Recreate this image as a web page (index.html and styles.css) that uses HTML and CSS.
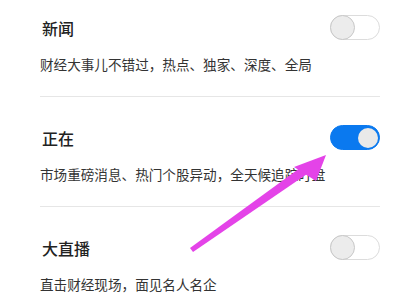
FILE: index.html
```html
<!DOCTYPE html>
<html lang="zh">
<head>
<meta charset="utf-8">
<link rel="stylesheet" href="styles.css">
</head>
<body>
<div class="list">
  <div class="item">
    <div class="row">
      <span class="title">新闻</span>
      <span class="toggle"><span class="knob"></span></span>
    </div>
    <div class="desc">财经大事儿不错过，热点、独家、深度、全局</div>
  </div>
  <div class="item">
    <div class="row">
      <span class="title">正在</span>
      <span class="toggle on"><span class="knob"></span></span>
    </div>
    <div class="desc">市场重磅消息、热门个股异动，全天候追踪盯盘</div>
  </div>
  <div class="item last">
    <div class="row">
      <span class="title">大直播</span>
      <span class="toggle"><span class="knob"></span></span>
    </div>
    <div class="desc">直击财经现场，面见名人名企</div>
  </div>
</div>
<svg class="arrow" width="400" height="305" viewBox="0 0 400 305">
  <polygon points="190,248 193,252 310,172 304,165" fill="#e443e8"/>
  <polygon points="294,167 326,155 316,181" fill="#e443e8"/>
</svg>
</body>
</html>
```
FILE: styles.css
```css
html, body {
  margin: 0;
  padding: 0;
  background: #ffffff;
  width: 400px;
  height: 305px;
  overflow: hidden;
  position: relative;
  font-family: "Noto Sans CJK SC", "Noto Sans", sans-serif;
}
.list {
  padding: 0 20px 0 40px;
}
.item {
  padding: 28px 0 22px 0;
  border-bottom: 1px solid #e6e6e6;
}
.item:first-child {
  padding-top: 15px;
}
.item.last {
  border-bottom: none;
}
.row {
  display: flex;
  align-items: center;
  justify-content: space-between;
  height: 25px;
}
.title {
  font-size: 16px;
  font-weight: 500;
  color: #222;
  padding-left: 2px;
}
.desc {
  margin-top: 14px;
  font-size: 13.6px;
  line-height: 20px;
  color: #333;
  white-space: nowrap;
}
.toggle {
  width: 50px;
  height: 25px;
  box-sizing: border-box;
  border-radius: 13px;
  border: 1.5px solid #dcdcdc;
  background: #fff;
  display: flex;
  align-items: center;
  justify-content: flex-start;
}
.toggle .knob {
  width: 25px;
  height: 25px;
  box-sizing: border-box;
  border-radius: 50%;
  background: #ececec;
  border: 1.5px solid #c8c8c8;
  margin-left: -1.5px;
}
.toggle.on {
  background: #0a79ef;
  border-color: #0a79ef;
  justify-content: flex-end;
}
.toggle.on .knob {
  width: 20px;
  height: 20px;
  border: none;
  background: #e9e9e9;
  margin: 0 1px 0 0;
}
.arrow {
  position: absolute;
  left: 0;
  top: 0;
}
```
